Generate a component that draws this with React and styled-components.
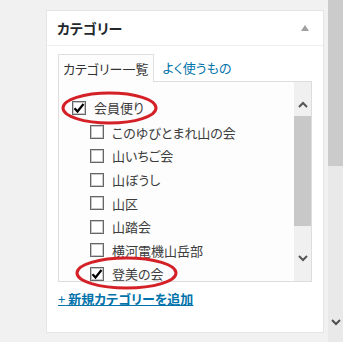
import React from "react";
import styled, { createGlobalStyle } from "styled-components";

const GlobalStyle = createGlobalStyle`
  html, body { margin: 0; padding: 0; background: #f1f1f1; }
  body {
    font-family: "Noto Sans CJK JP", "Noto Sans", sans-serif;
    color: #444;
  }
  * { box-sizing: border-box; }
`;

const Page = styled.div`
  position: relative;
  display: flex;
  width: 343px;
  height: 342px;
  overflow: hidden;
`;

const Main = styled.div`
  flex: 1;
  padding: 10px 0 0 46px;
`;

const PageScroll = styled.div`
  width: 15px;
  height: 100%;
  background: #e9e9e9;
  display: flex;
  flex-direction: column;
  align-items: center;
`;

const PageThumb = styled.div`
  width: 100%;
  height: 166px;
  background: #cbcbcb;
`;

const PageScrollSpacer = styled.div`
  flex: 1;
`;

const PageArrow = styled.div`
  height: 14px;
  margin-bottom: 13px;
  display: flex;
  align-items: center;
  justify-content: center;
`;

const Panel = styled.section`
  width: 278px;
  height: 323px;
  background: #fff;
  border: 1px solid #e5e5e5;
`;

const Header = styled.div`
  height: 35px;
  border-bottom: 1px solid #eee;
  display: flex;
  align-items: center;
  justify-content: space-between;
  padding: 0 14px 0 10px;
`;

const Title = styled.h2`
  margin: 0;
  font-size: 14px;
  font-weight: 700;
  color: #23282d;
  font-feature-settings: "palt";
  line-height: 1;
`;

const Toggle = styled.span`
  width: 0;
  height: 0;
  border-left: 4px solid transparent;
  border-right: 4px solid transparent;
  border-bottom: 6px solid #a0a0a0;
`;

const Body = styled.div`
  padding: 8px 11px 0 11px;
`;

const Tabs = styled.div`
  display: flex;
  align-items: stretch;
  height: 27px;
  gap: 8px;
`;

const Tab = styled.span`
  display: flex;
  align-items: center;
  font-size: 13px;
  font-feature-settings: "palt";
  padding: 0 ${(p) => (p.$active ? "5px 0 4px" : "0")};
  color: ${(p) => (p.$active ? "#333" : "#0073aa")};
  background: ${(p) => (p.$active ? "#fdfdfd" : "transparent")};
  border: ${(p) => (p.$active ? "1px solid #dfdfdf" : "none")};
  border-bottom: none;
  position: relative;
  z-index: 1;
  margin-bottom: ${(p) => (p.$active ? "-1px" : "0")};
  height: ${(p) => (p.$active ? "28px" : "27px")};
`;

const Box = styled.div`
  width: 254px;
  height: 201px;
  border: 1px solid #dddddd;
  background: #fdfdfd;
  display: flex;
`;

const List = styled.ul`
  flex: 1;
  list-style: none;
  margin: 0;
  padding: 14px 0 0 13px;
`;

const SubList = styled.ul`
  list-style: none;
  margin: 1px 0 0 0;
  padding: 0 0 0 18px;
`;

const Row = styled.label`
  display: flex;
  align-items: center;
  gap: 8px;
  height: 23.6px;
  font-size: 13px;
  color: #3c3c3c;
  font-feature-settings: "palt";
  white-space: nowrap;
`;

const Check = styled.span`
  flex: none;
  width: 14px;
  height: 14px;
  border: 1px solid #666;
  box-shadow: inset 0 0 0 1px #c8c8c8;
  background: #fff;
  display: flex;
  align-items: center;
  justify-content: center;
`;

const BoxScroll = styled.div`
  width: 17px;
  background: #f0f0f0;
  display: flex;
  flex-direction: column;
  padding: 14px 0;
`;

const ScrollBtn = styled.div`
  height: 17px;
  display: flex;
  align-items: center;
  justify-content: center;
`;

const Track = styled.div`
  flex: 1;
  padding-top: 3px;
`;

const Thumb = styled.div`
  height: 110px;
  background: #c8c8c8;
`;

const AddLink = styled.a`
  display: inline-block;
  margin-top: 8px;
  font-size: 13px;
  line-height: 18px;
  font-weight: 700;
  color: #0073aa;
  text-decoration: underline;
  font-feature-settings: "palt";
`;

const Plus = styled.span`
  font-weight: 400;
`;

const Annotations = styled.svg`
  position: absolute;
  left: 0;
  top: 0;
  pointer-events: none;
`;

const Chevron = ({ up, color = "#555" }) => (
  <svg width="10" height="7" viewBox="0 0 10 7">
    <path
      d={up ? "M1 6 L5 2 L9 6" : "M1 1 L5 5 L9 1"}
      fill="none"
      stroke={color}
      strokeWidth="2"
    />
  </svg>
);

const Checkbox = ({ checked }) => (
  <Check>
    {checked && (
      <svg width="12" height="12" viewBox="0 0 12 12">
        <path d="M1.5 6.2 L4.5 9.5 L10.5 2" fill="none" stroke="#000" strokeWidth="2.2" />
      </svg>
    )}
  </Check>
);

const children = [
  { name: "このゆびとまれ山の会" },
  { name: "山いちご会" },
  { name: "山ぼうし" },
  { name: "山区" },
  { name: "山踏会" },
  { name: "横河電機山岳部" },
  { name: "登美の会", checked: true },
];

export default function App() {
  return (
    <>
      <GlobalStyle />
      <Page>
        <Main>
          <Panel>
            <Header>
              <Title>カテゴリー</Title>
              <Toggle />
            </Header>
            <Body>
              <Tabs>
                <Tab $active>カテゴリー一覧</Tab>
                <Tab>よく使うもの</Tab>
              </Tabs>
              <Box>
                <List>
                  <li>
                    <Row>
                      <Checkbox checked />
                      会員便り
                    </Row>
                    <SubList>
                      {children.map((c) => (
                        <li key={c.name}>
                          <Row>
                            <Checkbox checked={c.checked} />
                            {c.name}
                          </Row>
                        </li>
                      ))}
                    </SubList>
                  </li>
                </List>
                <BoxScroll>
                  <ScrollBtn>
                    <Chevron up />
                  </ScrollBtn>
                  <Track>
                    <Thumb />
                  </Track>
                  <ScrollBtn>
                    <Chevron />
                  </ScrollBtn>
                </BoxScroll>
              </Box>
              <AddLink href="#">
                <Plus>+</Plus> 新規カテゴリーを追加
              </AddLink>
            </Body>
          </Panel>
        </Main>
        <PageScroll>
          <PageThumb />
          <PageScrollSpacer />
          <PageArrow>
            <Chevron color="#505050" />
          </PageArrow>
        </PageScroll>
        <Annotations width="343" height="342" viewBox="0 0 343 342">
          <ellipse cx="109.5" cy="108" rx="46.5" ry="15" fill="none" stroke="#d42027" strokeWidth="3" />
          <ellipse cx="126.5" cy="273" rx="49.5" ry="15" fill="none" stroke="#d42027" strokeWidth="3" />
        </Annotations>
      </Page>
    </>
  );
}
